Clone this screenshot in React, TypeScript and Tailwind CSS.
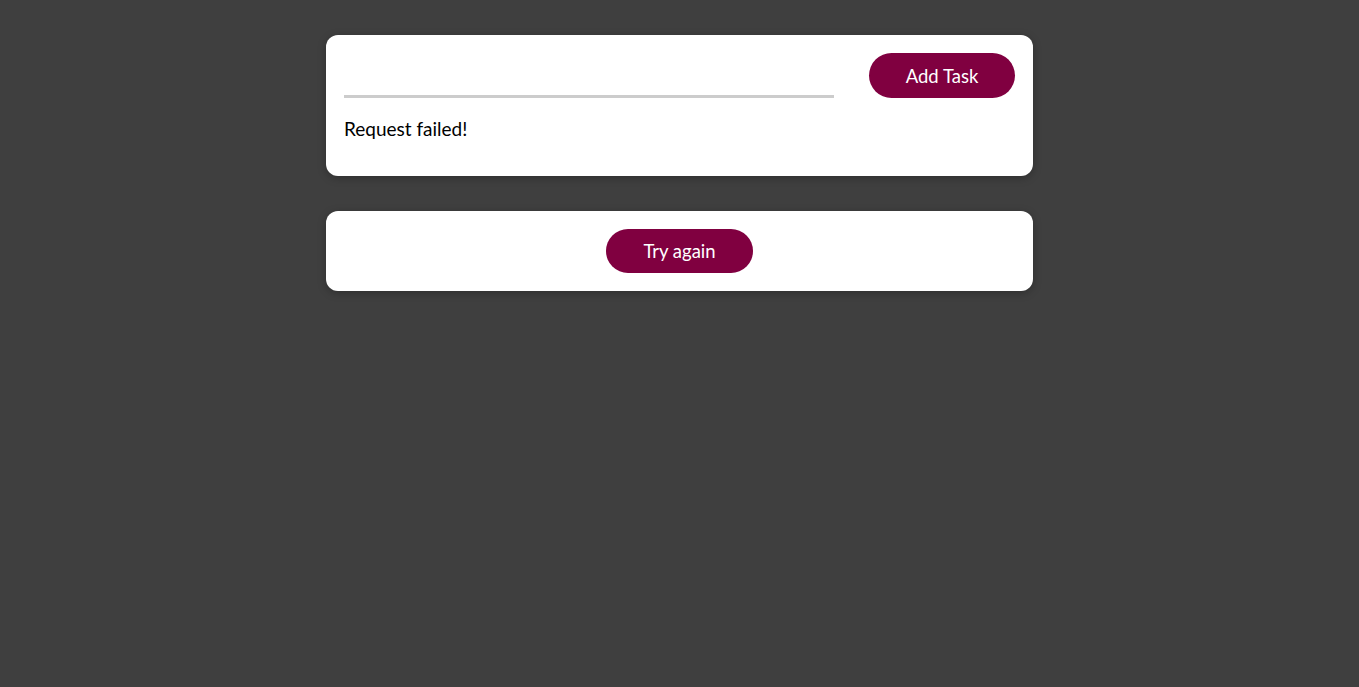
import React from "react";

export default function App() {
  return (
    <div
      className="min-h-[687px] w-full bg-[#3f3f3f] pt-[35px]"
      style={{ fontFamily: "Lato, 'Noto Sans', sans-serif" }}
    >
      <div className="mx-auto flex w-[707px] flex-col gap-[35px]">
        <div className="rounded-[12px] bg-white px-[18px] pt-[18px] pb-[34px] shadow-[0_2px_8px_rgba(0,0,0,0.26)]">
          <div className="flex items-center">
            <div className="h-[44px] w-[490px] border-b-[3px] border-[#cccccc]" />
            <button className="ml-auto h-[45px] w-[146px] rounded-full bg-[#800040] pt-[2px] text-[18.5px] text-white">
              Add Task
            </button>
          </div>
          <p className="mt-[17px] text-[19px] leading-[27px] text-black">Request failed!</p>
        </div>
        <div className="flex justify-center rounded-[12px] bg-white py-[18px] shadow-[0_2px_8px_rgba(0,0,0,0.26)]">
          <button className="h-[44px] w-[147px] rounded-full bg-[#800040] pt-[1px] text-[18.5px] text-white">
            Try again
          </button>
        </div>
      </div>
    </div>
  );
}
